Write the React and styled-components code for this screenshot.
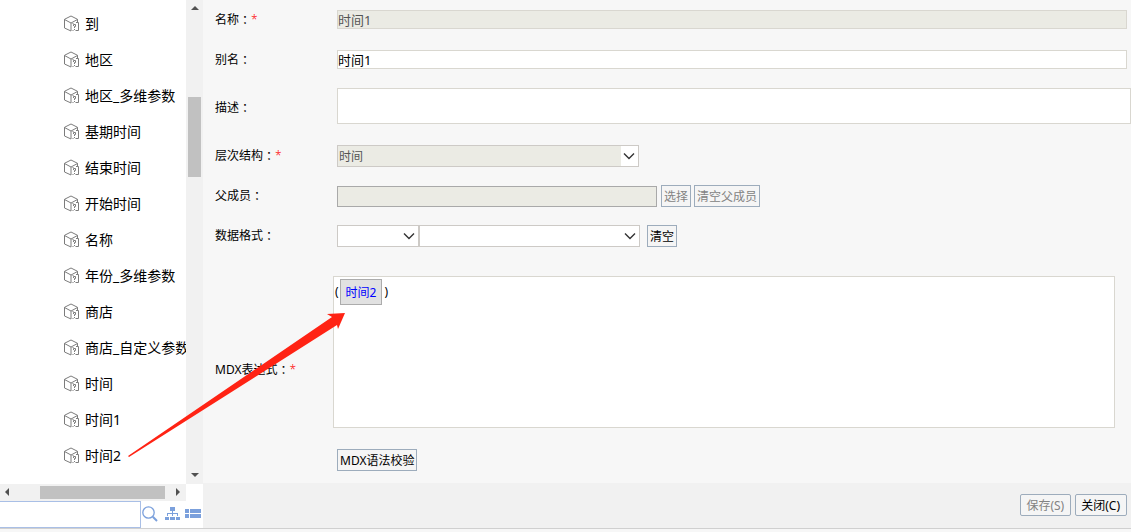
import React from "react";
import styled, { createGlobalStyle } from "styled-components";

const GlobalStyle = createGlobalStyle`
  * {
    box-sizing: border-box;
  }

  body {
    margin: 0;
    background-color: #f7f7f7;
  }

  body, input, select, textarea, button {
    font-family: "Noto Sans", "Noto Sans CJK SC", sans-serif;
    font-size: 12px;
    color: #000;
  }
`;

const Page = styled.div`
  position: relative;
  display: flex;
  flex-direction: column;
  min-height: 100vh;
`;

const Main = styled.div`
  display: flex;
  flex: 1;
  border-bottom: 1px solid #d0d0d0;
  margin-bottom: 3px;
`;

const Sidebar = styled.aside`
  width: 203px;
  flex-shrink: 0;
  display: flex;
  flex-direction: column;
  background-color: #fff;
`;

const TreeArea = styled.div`
  display: flex;
  flex: 1;
`;

const TreeList = styled.ul`
  flex: 1;
  min-width: 0;
  margin: 0;
  padding: 5px 0 11px 63px;
  list-style: none;
  overflow: hidden;
`;

const TreeItem = styled.li`
  display: flex;
  align-items: center;
  gap: 6px;
  height: 36px;
  font-size: 14px;
  white-space: nowrap;

  svg {
    flex-shrink: 0;
  }
`;

const ScrollTrack = styled.div`
  display: flex;
  flex-direction: ${(props) => (props.$horizontal ? "row" : "column")};
  align-items: center;
  width: ${(props) => (props.$horizontal ? "186px" : "17px")};
  height: ${(props) => (props.$horizontal ? "17px" : "auto")};
  flex-shrink: 0;
  background-color: #f1f1f1;
`;

const ScrollRail = styled.div`
  display: flex;
  flex: 1;
  align-items: flex-start;
  padding: ${(props) => (props.$horizontal ? "0 0 0 24px" : "80px 0 0")};
`;

const ScrollThumb = styled.div`
  width: ${(props) => (props.$horizontal ? "125px" : "13px")};
  height: ${(props) => (props.$horizontal ? "13px" : "80px")};
  background-color: #c1c1c1;
`;

const ScrollArrow = styled.svg`
  width: 16px;
  height: 17px;
  fill: #505050;
`;

const SearchBar = styled.div`
  display: flex;
  align-items: center;
  height: 27px;
`;

const SearchInput = styled.input`
  width: 141px;
  height: 27px;
  border: 1px solid #a9bfe6;
  border-left: none;
  padding: 0 4px;
  outline: none;
`;

const IconButton = styled.button`
  display: flex;
  align-items: center;
  justify-content: center;
  width: ${(props) => props.$width || 22}px;
  height: 24px;
  margin-bottom: 2px;
  padding: 0;
  border: none;
  background: none;
  cursor: pointer;
`;

const Panel = styled.form`
  flex: 1;
  min-width: 0;
  display: flex;
  flex-direction: column;
`;

const Fields = styled.div`
  flex: 1;
  padding-left: 12px;
`;

const Row = styled.div`
  display: grid;
  grid-template-columns: 122px 1fr;
  align-items: center;
  min-height: ${(props) => (props.$tall ? 56 : 40)}px;
`;

const Label = styled.label`
  line-height: 18px;
  white-space: nowrap;
`;

const Colon = styled.span`
  font-family: "Noto Sans CJK TC", sans-serif;
  line-height: 1;
  vertical-align: -1px;
`;

const Required = styled.span`
  color: #f00;
  font-weight: 300;
`;

const Value = styled.div`
  display: flex;
  align-items: center;
  min-width: 0;
`;

const TextInput = styled.input`
  flex: 1;
  min-width: 0;
  height: 19px;
  margin: 0 4px 1px 0;
  padding: 0;
  border: 1px solid #d9d7d0;
  border-radius: 0;
  background-color: #fff;
  font-size: 13px;

  &:disabled {
    background-color: #ebebe4;
    color: #545454;
  }
`;

const ParentInput = styled(TextInput)`
  flex: 0 1 320px;
  height: 21px;
  margin-bottom: 0;
  border-color: #a9a9a9;
`;

const Description = styled.textarea`
  display: block;
  width: 100%;
  height: 36px;
  margin-bottom: 4px;
  padding: 2px;
  border: 1px solid #d9d7d0;
  resize: none;
`;

const SelectBox = styled.div`
  position: relative;
  width: ${(props) => props.$width}px;
  height: 22px;
  border: 1px solid #cdcac6;
  background-color: #fff;

  svg {
    position: absolute;
    right: 3px;
    top: 6px;
    pointer-events: none;
  }
`;

const Select = styled.select`
  appearance: none;
  display: block;
  width: 100%;
  height: 20px;
  padding: 0 18px 0 1px;
  border: none;
  border-radius: 0;
  background-color: transparent;
  outline: none;

  &:disabled {
    border-right: 17px solid #fff;
    padding-right: 0;
    background-color: #ebebe4;
    color: #545454;
    opacity: 1;
  }
`;

const Button = styled.button`
  height: 22px;
  padding: 2px 2px 0;
  margin-left: ${(props) => props.$gap || 0}px;
  border: 1px solid #9dacbc;
  border-radius: ${(props) => (props.$rounded ? "2px" : "0")};
  background-color: #f5f5f5;
  line-height: 18px;
  white-space: nowrap;
  cursor: pointer;

  &:disabled {
    color: #838383;
    cursor: default;
  }
`;

const Editor = styled.div`
  display: flex;
  align-items: flex-start;
  height: 152px;
  margin: 20px 16px 21px -4px;
  padding: 2px 1px;
  border: 1px solid #d9d7d0;
  background-color: #fff;
  line-height: 26px;
`;

const MemberChip = styled.span`
  height: 26px;
  margin: 0 2px 0 1px;
  padding: 0 5px;
  border: 1px solid #acacac;
  background-color: #e1e1e1;
  color: #00f;
`;

const Expression = styled.div`
  padding-bottom: 12px;
`;

const Footer = styled.footer`
  display: flex;
  justify-content: flex-end;
  align-items: center;
  gap: 4px;
  height: 45px;
  padding: 0 4px 1px 0;
  background-color: #f1f1f1;

  ${Button} {
    padding: 1px 6px 0 5px;
  }
`;

const DragArrow = styled.svg`
  position: absolute;
  left: 128px;
  top: 313px;
  pointer-events: none;
`;

const members = [
  "到",
  "地区",
  "地区_多维参数",
  "基期时间",
  "结束时间",
  "开始时间",
  "名称",
  "年份_多维参数",
  "商店",
  "商店_自定义参数",
  "时间",
  "时间1",
  "时间2",
];

function CubeIcon() {
  return (
    <svg width="16" height="17" viewBox="0 0 16 17" fill="none" stroke="#7c7c7c">
      <path d="M14.500 7V4.300L8 1L1.500 4.300V13L8 16V8L1.500 4.500M8 8L14.500 4.500" />
      <path d="M9.500 8.500H10.500M13 7.500H15.500V15.500H12.500M9.500 15.500H10.500" />
      <path d="M10.500 11V9.500H12.500V11.500H11.500V13M11.500 14V15" />
    </svg>
  );
}

function Chevron() {
  return (
    <svg width="12" height="8" viewBox="0 0 12 8" fill="none" stroke="#333" strokeWidth="1.4">
      <path d="M1 1.500L6 6.500L11 1.500" />
    </svg>
  );
}

function FieldLabel({ id, children, required }) {
  return (
    <Label htmlFor={id}>
      {children}
      <Colon>：</Colon>
      {required && <Required>*</Required>}
    </Label>
  );
}

function MemberTree() {
  return (
    <Sidebar>
      <TreeArea>
        <TreeList>
          {members.map((name) => (
            <TreeItem key={name}>
              <CubeIcon />
              {name}
            </TreeItem>
          ))}
        </TreeList>
        <ScrollTrack>
          <ScrollArrow viewBox="0 0 16 17">
            <path d="M4 10H12L8 6Z" />
          </ScrollArrow>
          <ScrollRail>
            <ScrollThumb />
          </ScrollRail>
          <ScrollArrow viewBox="0 0 16 17">
            <path d="M4 6H12L8 10Z" />
          </ScrollArrow>
        </ScrollTrack>
      </TreeArea>
      <ScrollTrack $horizontal>
        <ScrollArrow viewBox="0 0 16 17">
          <path d="M9 4V12L5 8Z" />
        </ScrollArrow>
        <ScrollRail $horizontal>
          <ScrollThumb $horizontal />
        </ScrollRail>
        <ScrollArrow viewBox="0 0 16 17">
          <path d="M6 4V12L10 8Z" />
        </ScrollArrow>
      </ScrollTrack>
      <SearchBar>
        <SearchInput type="text" aria-label="搜索" />
        <IconButton type="button" aria-label="搜索" $width={18}>
          <svg width="16" height="16" viewBox="0 0 16 16" fill="none" stroke="#7ba0dc">
            <circle cx="6.500" cy="6.500" r="5.700" strokeWidth="1.300" />
            <path d="M10.800 10.800L15 15" strokeWidth="2" />
          </svg>
        </IconButton>
        <IconButton type="button" aria-label="树形" $width={26}>
          <svg width="15" height="13" viewBox="0 0 15 13" fill="#7ba0dc">
            <path d="M5 0H10V4H8V6H13V9H12V7H8V9H7V7H3V9H2V6H7V4H5ZM0 10H4V13H0ZM5 10H10V13H5ZM11 10H15V13H11Z" />
          </svg>
        </IconButton>
        <IconButton type="button" aria-label="列表" $width={16}>
          <svg width="16" height="9" viewBox="0 0 16 9" fill="#7ba0dc">
            <path d="M0 0H4V4H0ZM5 0H16V4H5ZM0 5H4V9H0ZM5 5H16V9H5Z" />
          </svg>
        </IconButton>
      </SearchBar>
    </Sidebar>
  );
}

export default function App() {
  return (
    <Page>
      <GlobalStyle />
      <Main>
        <MemberTree />
        <Panel onSubmit={(e) => e.preventDefault()}>
          <Fields>
            <Row>
              <FieldLabel id="name" required>名称</FieldLabel>
              <Value>
                <TextInput id="name" defaultValue="时间1" disabled />
              </Value>
            </Row>
            <Row>
              <FieldLabel id="alias">别名</FieldLabel>
              <Value>
                <TextInput id="alias" defaultValue="时间1" />
              </Value>
            </Row>
            <Row $tall>
              <FieldLabel id="desc">描述</FieldLabel>
              <Description id="desc" />
            </Row>
            <Row>
              <FieldLabel id="hierarchy" required>层次结构</FieldLabel>
              <SelectBox $width={302}>
                <Select id="hierarchy" disabled>
                  <option>时间</option>
                </Select>
                <Chevron />
              </SelectBox>
            </Row>
            <Row>
              <FieldLabel id="parent">父成员</FieldLabel>
              <Value>
                <ParentInput id="parent" disabled />
                <Button type="button" disabled>选择</Button>
                <Button type="button" disabled $gap={3}>清空父成员</Button>
              </Value>
            </Row>
            <Row>
              <FieldLabel id="format">数据格式</FieldLabel>
              <Value>
                <SelectBox $width={82}>
                  <Select id="format">
                    <option></option>
                  </Select>
                  <Chevron />
                </SelectBox>
                <SelectBox $width={221}>
                  <Select aria-label="格式">
                    <option></option>
                  </Select>
                  <Chevron />
                </SelectBox>
                <Button type="button" $gap={7}>清空</Button>
              </Value>
            </Row>
            <Row>
              <FieldLabel id="mdx" required>MDX表达式</FieldLabel>
              <Expression>
                <Editor id="mdx" role="textbox" tabIndex={0}>
                  (<MemberChip>时间2</MemberChip>)
                </Editor>
                <Button type="button">MDX语法校验</Button>
              </Expression>
            </Row>
          </Fields>
          <Footer>
            <Button type="submit" disabled $rounded>保存(S)</Button>
            <Button type="button" $rounded>关闭(C)</Button>
          </Footer>
        </Panel>
      </Main>
      <DragArrow width="218" height="145" viewBox="0 0 218 145" fill="#ff2314">
        <path d="M0 143L204 4L199 1L217 0L210 16L209 12L1 144Z" />
      </DragArrow>
    </Page>
  );
}
